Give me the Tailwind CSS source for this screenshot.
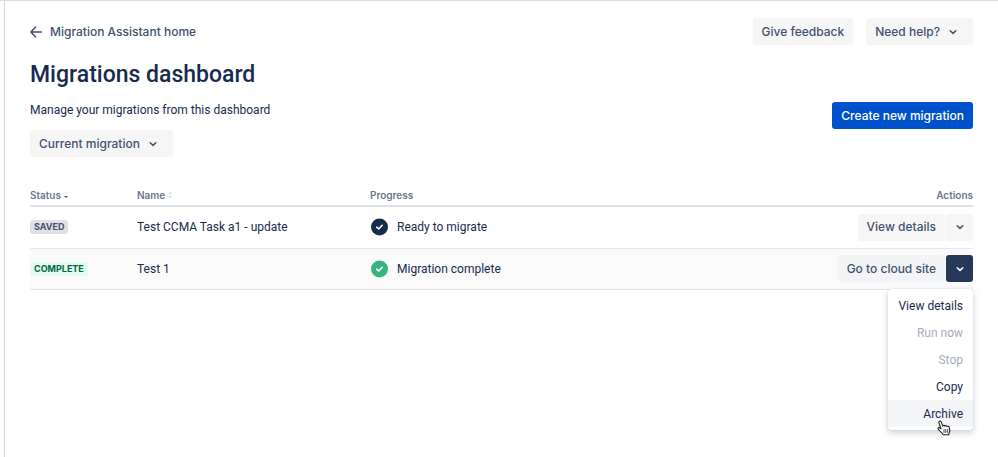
<!DOCTYPE html>
<html lang="en">
<head>
    <meta charset="UTF-8">
    <meta name="viewport" content="width=device-width, initial-scale=1.0">
    <title>Migrations dashboard</title>
    <script src="https://cdn.jsdelivr.net/npm/@tailwindcss/browser@4"></script>
</head>
<body class="bg-white border-t border-[#dcdcde] pl-1 font-['Roboto','Liberation_Sans',sans-serif] text-xs text-[#172b4d]">
    <!-- shared shapes -->
    <svg class="hidden">
        <symbol id="chevron" viewBox="0 0 8 8">
            <path d="M1.2 2.8 4 5.4 6.8 2.8" fill="none" stroke="currentColor" stroke-width="1.5" stroke-linecap="round" stroke-linejoin="round"/>
        </symbol>
        <symbol id="check" viewBox="0 0 18 18">
            <circle cx="9" cy="9" r="8.5" fill="currentColor"/>
            <path d="M6.3 9.2 8.2 11 11.7 7.3" fill="none" stroke="#fff" stroke-width="1.6" stroke-linecap="round" stroke-linejoin="round"/>
        </symbol>
    </svg>

    <main class="min-h-screen border-l border-[#d4d4d6] px-[25px] pt-[17px]">
        <div class="flex items-center justify-between font-['Inter','Liberation_Sans',sans-serif]">
            <a href="#" class="flex items-center gap-2 font-medium text-[#42526e]">
                <svg class="w-3 h-3" viewBox="0 0 12 12" fill="none" stroke="currentColor" stroke-width="1.6" stroke-linecap="round" stroke-linejoin="round">
                    <path d="M11.3 6H1M5.4 1.2.9 6l4.5 4.8"/>
                </svg>
                Migration Assistant home
            </a>
            <div class="flex gap-[13px]">
                <button class="h-[27px] px-[9px] rounded-[3px] bg-[#f6f6f7] font-medium text-[#42526e]">Give feedback</button>
                <button class="flex items-center gap-[9px] h-[27px] pl-[9px] pr-4 rounded-[3px] bg-[#f6f6f7] font-medium text-[#42526e]">
                    Need help?
                    <svg class="w-2 h-2"><use href="#chevron"/></svg>
                </button>
            </div>
        </div>

        <div class="flex items-end justify-between pt-4">
            <div>
                <h1 class="text-[23px] leading-7 font-medium">Migrations dashboard</h1>
                <p class="mt-[13px] leading-4">Manage your migrations from this dashboard</p>
            </div>
            <button class="h-[27px] px-[9px] -mb-[11px] rounded-[3px] bg-[#0052cc] font-['Inter','Liberation_Sans',sans-serif] font-medium text-white">Create new migration</button>
        </div>

        <button class="flex items-center gap-[9px] h-[27px] mt-3 pl-[9px] pr-4 rounded-[3px] bg-[#f6f6f7] font-['Inter','Liberation_Sans',sans-serif] font-medium text-[#42526e]">
            Current migration
            <svg class="w-2 h-2"><use href="#chevron"/></svg>
        </button>

        <table class="w-full mt-7 table-fixed border-collapse text-left">
            <thead class="border-b-2 border-[#dfe1e6] font-['Inter','Liberation_Sans',sans-serif] text-[10px] leading-4 text-[#6b778c]">
                <tr class="h-[21px] align-top">
                    <th class="w-[107px] p-0 pt-[2px] font-semibold">
                        <span class="flex items-center gap-[3px]">Status
                            <svg class="w-1 h-2" viewBox="0 0 4 8"><path d="M0 3 2 1l2 2z" fill="#e4e6ea"/><path d="M0 5h4L2 7z" fill="#42526e"/></svg>
                        </span>
                    </th>
                    <th class="w-[233px] p-0 pt-[2px] font-semibold">
                        <span class="flex items-center gap-[3px]">Name
                            <svg class="w-1 h-2" viewBox="0 0 4 8" fill="#d5d8de"><path d="M0 3 2 1l2 2zM0 5h4L2 7z"/></svg>
                        </span>
                    </th>
                    <th class="p-0 pt-[2px] font-semibold">Progress</th>
                    <th class="p-0 pt-[2px] text-right font-semibold">Actions</th>
                </tr>
            </thead>
            <tbody>
                <tr class="h-[42px] border-b border-[#e4e8ee]">
                    <td class="p-0">
                        <span class="block w-fit px-1 rounded-[3px] bg-[#dfe1e6] font-['Inter','Liberation_Sans',sans-serif] text-[9px] leading-[14px] font-bold text-[#42526e]">SAVED</span>
                    </td>
                    <td class="p-0">Test CCMA Task a1 - update</td>
                    <td class="p-0">
                        <span class="flex items-center gap-2">
                            <svg class="w-[19px] h-[18px] text-[#172b4d]"><use href="#check"/></svg>
                            Ready to migrate
                        </span>
                    </td>
                    <td class="p-0">
                        <div class="flex justify-end gap-px font-['Inter','Liberation_Sans',sans-serif]">
                            <button class="h-[27px] px-[9px] rounded-[3px] bg-[#f6f6f7] font-medium text-[#42526e]">View details</button>
                            <button aria-label="More actions" class="grid place-items-center w-[27px] h-[27px] rounded-[3px] bg-[#f6f6f7] text-[#42526e]">
                                <svg class="w-2 h-2"><use href="#chevron"/></svg>
                            </button>
                        </div>
                    </td>
                </tr>
                <tr class="h-[41px] border-b border-[#e3e4e7] bg-[#fafafb]">
                    <td class="p-0">
                        <span class="block w-fit px-1 rounded-[3px] bg-[#e3fcef] font-['Inter','Liberation_Sans',sans-serif] text-[9px] leading-[14px] font-bold text-[#006644]">COMPLETE</span>
                    </td>
                    <td class="p-0">Test 1</td>
                    <td class="p-0">
                        <span class="flex items-center gap-2">
                            <svg class="w-[19px] h-[18px] text-[#36b37e]"><use href="#check"/></svg>
                            Migration complete
                        </span>
                    </td>
                    <td class="p-0">
                        <div class="relative flex justify-end gap-px">
                            <button class="h-[27px] px-[9px] rounded-[3px] bg-[#f3f4f6] font-['Inter','Liberation_Sans',sans-serif] font-medium text-[#42526e]">Go to cloud site</button>
                            <button aria-label="More actions" aria-expanded="true" class="grid place-items-center w-[27px] h-[27px] rounded-[3px] bg-[#253858] text-white">
                                <svg class="w-2 h-2"><use href="#chevron"/></svg>
                            </button>
                            <!-- open actions menu -->
                            <div role="menu" class="absolute right-0 top-[34px] flex flex-col w-[85px] py-[3px] rounded-[3px] bg-white shadow-[0_3px_6px_rgba(9,30,66,0.2),0_0_1px_rgba(9,30,66,0.25)]">
                                <button role="menuitem" class="h-[27px] px-[10px] text-right whitespace-nowrap">View details</button>
                                <button role="menuitem" disabled class="h-[27px] px-[10px] text-right text-[#a5adba]">Run now</button>
                                <button role="menuitem" disabled class="h-[27px] px-[10px] text-right text-[#a5adba]">Stop</button>
                                <button role="menuitem" class="h-[27px] px-[10px] text-right">Copy</button>
                                <button role="menuitem" class="h-[27px] px-[10px] text-right bg-[#f4f5f7]">Archive</button>
                                <!-- hand cursor -->
                                <svg class="absolute left-[49px] bottom-[-6px] w-[14px] h-[16px]" viewBox="0 0 14 16" fill="#fff" stroke="#222" stroke-width="1.1" stroke-linejoin="round" stroke-linecap="round">
                                    <path d="M2.4 1.3c.8-.5 1.6 0 1.9.8L5.8 6c.3-.8 1.9-.8 2.2.1.5-.7 1.8-.5 2.1.4.7-.6 1.9-.2 2.1.8.4 1.4.8 2.9.5 4.1-.2 1-.7 1.4-.8 2.3v1H6.2c-.5-1.4-2.2-2.4-3.3-3.7C2.1 10 .8 9.2.9 8.4c.1-.9 1.3-1 2.1-.3l1 .8L1.9 2.8c-.2-.6 0-1.2.5-1.5z"/>
                                    <path d="M7 9.5v3M8.8 9.5v3M10.6 9.5v3" stroke-width=".8"/>
                                </svg>
                            </div>
                        </div>
                    </td>
                </tr>
            </tbody>
        </table>
    </main>
</body>
</html>
